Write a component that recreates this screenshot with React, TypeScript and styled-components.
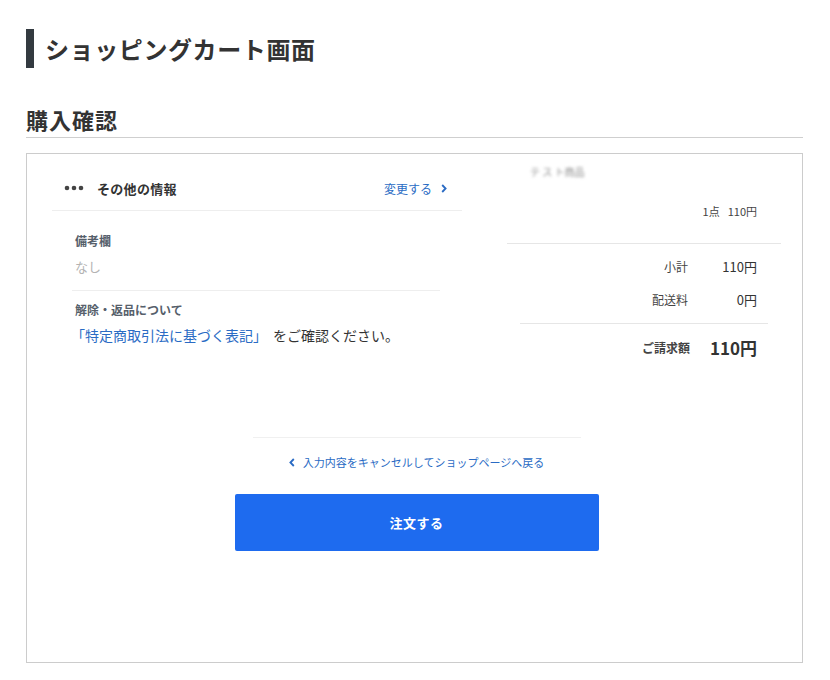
import styled, { createGlobalStyle } from 'styled-components'

const GlobalStyle = createGlobalStyle`
  body {
    margin: 0;
    background: #fff;
    font-family: "Noto Sans CJK JP", "Noto Sans", sans-serif;
    color: #333;
  }
`

const Page = styled.div`
  padding: 29px 27px 0 26px;
`

const Title = styled.h1`
  margin: 0;
  height: 39px;
  border-left: 8px solid #333a40;
  padding-left: 11px;
  display: flex;
  align-items: center;
  font-size: 24px;
  letter-spacing: 0.6px;
  font-weight: 700;
  color: #333;
`

const SubTitle = styled.h2`
  margin: 36px 0 0;
  font-size: 22px;
  line-height: 30px;
  letter-spacing: 1px;
  font-weight: 700;
  color: #333;
  padding-bottom: 3px;
  border-bottom: 1px solid #cfcfcf;
`

const Box = styled.div`
  margin-top: 15px;
  border: 1px solid #cccccc;
  padding: 0 21px 111px 25px;
`

const Columns = styled.div`
  display: grid;
  grid-template-columns: 410px 274px;
  column-gap: 45px;
  align-items: start;
`

const Left = styled.div`
  padding-top: 12px;
`

const PanelHeader = styled.div`
  height: 44px;
  display: flex;
  align-items: center;
  padding: 0 15px 0 12px;
  border-bottom: 1px solid #eeeeee;
`

const HeaderTitle = styled.span`
  font-size: 13px;
  font-weight: 700;
  letter-spacing: 0.3px;
  color: #333;
  margin-left: 13px;
  flex: 1;
`

const EditLink = styled.a`
  font-size: 12px;
  color: #2a6bc4;
  display: flex;
  align-items: center;
  gap: 9px;
  text-decoration: none;
`

const Section = styled.div<{ $divider?: boolean }>`
  margin: 0 22px 0 20px;
  padding: ${p => (p.$divider ? '21px 3px 13px' : '10px 3px 0')};
  border-bottom: ${p => (p.$divider ? '1px solid #eeeeee' : 'none')};
`

const Label = styled.div`
  font-size: 12px;
  line-height: 18px;
  font-weight: 700;
  color: #56606b;
`

const Empty = styled.div`
  margin-top: 7px;
  font-size: 13px;
  line-height: 20px;
  color: #b3b3b3;
`

const Notice = styled.div`
  margin-top: 5px;
  font-size: 14px;
  line-height: 22px;
  color: #333;
  margin-left: -4px;
`

const NoticeLink = styled.a`
  color: #2a6bc4;
  text-decoration: none;
  margin-right: 6px;
`

const Right = styled.div`
  padding-top: 10px;
`

const ItemName = styled.div`
  padding-left: 23px;
  font-size: 10px;
  line-height: 16px;
  color: #909090;
  filter: blur(1.4px);
`

const ItemLine = styled.div`
  margin-top: 23px;
  padding: 0 24px 24px 0;
  text-align: right;
  font-size: 11px;
  line-height: 16px;
  color: #444;
  border-bottom: 1px solid #e6e6e6;
  span + span {
    margin-left: 8px;
  }
`

const Summary = styled.div`
  padding: 13px 13px 0;
`

const Row = styled.div<{ $total?: boolean }>`
  display: flex;
  justify-content: flex-end;
  align-items: center;
  padding: ${p => (p.$total ? '12px 11px 0 0' : '0 11px 13px 0')};
  line-height: ${p => (p.$total ? '24px' : '20px')};
`

const RowLabel = styled.span<{ $bold?: boolean }>`
  font-size: 12px;
  font-weight: ${p => (p.$bold ? 700 : 400)};
  color: #444;
`

const RowValue = styled.span<{ $big?: boolean }>`
  width: ${p => (p.$big ? '67px' : '69px')};
  text-align: right;
  font-size: ${p => (p.$big ? '17px' : '13px')};
  font-weight: ${p => (p.$big ? 700 : 400)};
  color: #333;
`

const SummaryDivider = styled.div`
  border-top: 1px solid #e6e6e6;
`

const Footer = styled.div`
  margin: 77px auto 0;
  width: 364px;
  display: flex;
  flex-direction: column;
  align-items: center;
`

const FooterDivider = styled.div`
  width: 328px;
  border-top: 1px solid #f0f0f0;
`

const BackLink = styled.a`
  margin-top: 16px;
  font-size: 11px;
  line-height: 16px;
  color: #2a6bc4;
  display: flex;
  align-items: center;
  gap: 8px;
  text-decoration: none;
`

const OrderButton = styled.button`
  margin-top: 24px;
  width: 364px;
  height: 57px;
  border: none;
  border-radius: 2px;
  background: #1e6bef;
  color: #fff;
  font-family: inherit;
  font-size: 13px;
  font-weight: 700;
  letter-spacing: 0.5px;
`

const Dots = () => (
  <svg width="20" height="6" viewBox="0 0 20 6">
    <circle cx="3" cy="3" r="2.3" fill="#444" />
    <circle cx="10" cy="3" r="2.3" fill="#444" />
    <circle cx="17" cy="3" r="2.3" fill="#444" />
  </svg>
)

const Chevron = ({ left }: { left?: boolean }) => (
  <svg width="6" height="9" viewBox="0 0 6 9">
    <path
      d={left ? 'M4.8 1 L1.4 4.5 L4.8 8' : 'M1.2 1 L4.6 4.5 L1.2 8'}
      fill="none"
      stroke="#2a6bc4"
      strokeWidth="1.8"
    />
  </svg>
)

export default function App() {
  return (
    <>
      <GlobalStyle />
      <Page>
        <Title>ショッピングカート画面</Title>
        <SubTitle>購入確認</SubTitle>
        <Box>
          <Columns>
            <Left>
              <PanelHeader>
                <Dots />
                <HeaderTitle>その他の情報</HeaderTitle>
                <EditLink>
                  変更する
                  <Chevron />
                </EditLink>
              </PanelHeader>
              <Section $divider>
                <Label>備考欄</Label>
                <Empty>なし</Empty>
              </Section>
              <Section>
                <Label>解除・返品について</Label>
                <Notice>
                  <NoticeLink>「特定商取引法に基づく表記」</NoticeLink>
                  をご確認ください。
                </Notice>
              </Section>
            </Left>
            <Right>
              <ItemName>テ ス ト商品</ItemName>
              <ItemLine>
                <span>1点</span>
                <span>110円</span>
              </ItemLine>
              <Summary>
                <Row>
                  <RowLabel>小計</RowLabel>
                  <RowValue>110円</RowValue>
                </Row>
                <Row>
                  <RowLabel>配送料</RowLabel>
                  <RowValue>0円</RowValue>
                </Row>
                <SummaryDivider />
                <Row $total>
                  <RowLabel $bold>ご請求額</RowLabel>
                  <RowValue $big>110円</RowValue>
                </Row>
              </Summary>
            </Right>
          </Columns>
          <Footer>
            <FooterDivider />
            <BackLink>
              <Chevron left />
              入力内容をキャンセルしてショップページへ戻る
            </BackLink>
            <OrderButton>注文する</OrderButton>
          </Footer>
        </Box>
      </Page>
    </>
  )
}
